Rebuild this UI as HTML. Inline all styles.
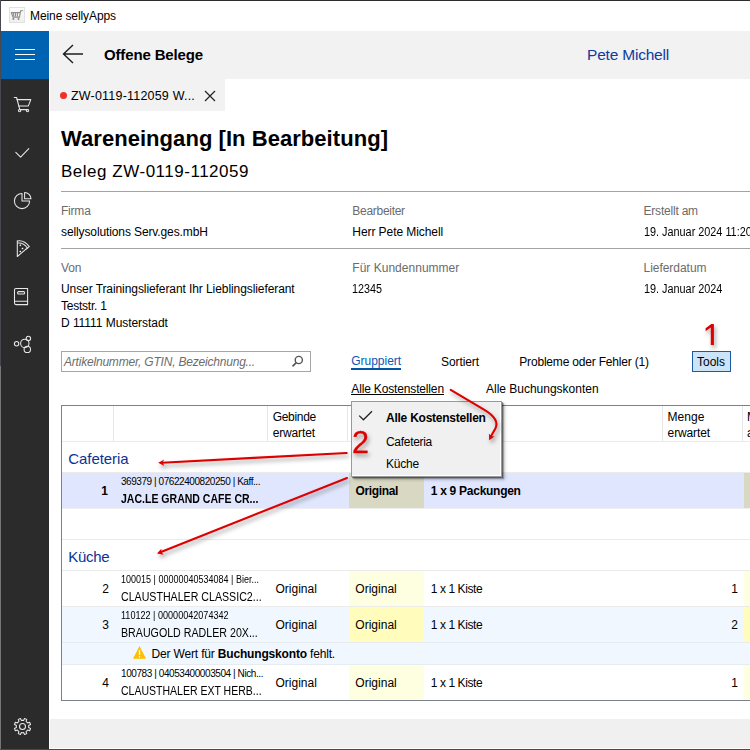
<!DOCTYPE html><html><head><meta charset="utf-8"><style>
html,body{margin:0;padding:0;width:750px;height:750px;overflow:hidden;background:#fff;}
body{position:relative;font-family:"Liberation Sans", sans-serif;}
body>div,.t{position:absolute;}
.t{white-space:nowrap;line-height:1;}
</style></head><body>
<div style="left:0px;top:0px;width:750px;height:1px;background:#2d2d2d;"></div>
<div style="left:0px;top:0px;width:1px;height:366px;background:#48484e;"></div>
<div style="left:0px;top:366px;width:1px;height:384px;background:#767676;"></div>
<div style="left:0px;top:749px;width:750px;height:1px;background:#4a4a4a;"></div>
<div style="left:9px;top:7px;width:16px;height:16px;box-sizing:border-box;border:1px solid #e2e2e2;background:linear-gradient(#fdfdfd,#efefef);"></div>
<svg style="position:absolute;left:9px;top:7px" width="16" height="16" viewBox="9 7 16 16"><g fill="none" stroke="#8c8c8c" stroke-width="1.1"><path d="M11.2 12.3 L13 17.1 H19.5 L20.6 10.7 H23.2"/><path d="M11.2 12.6 H20.2 M13.3 12.6 L13.9 16.5 M15.5 12.6 V16.5 M17.6 12.6 L17.3 16.5"/></g><circle cx="13.4" cy="19.1" r="1" fill="#888"/><circle cx="18.5" cy="19.1" r="1" fill="#888"/></svg>
<div style="left:1px;top:31px;width:48px;height:718px;background:#2b2b2b;"></div>
<div style="left:1px;top:31px;width:48px;height:48px;background:#0063b1;"></div>
<div style="left:15px;top:49px;width:20px;height:1px;background:#ffffff;"></div>
<div style="left:15px;top:54px;width:20px;height:1px;background:#ffffff;"></div>
<div style="left:15px;top:59px;width:20px;height:1px;background:#ffffff;"></div>
<div style="left:49px;top:31px;width:1px;height:718px;background:#ffffff;"></div>
<div style="left:50px;top:31px;width:700px;height:48px;background:#f2f2f2;"></div>
<svg style="position:absolute;left:60px;top:42px" width="26" height="24" viewBox="0 0 26 24"><path d="M13 3 L3.5 12 L13 21 M3.5 12 H23" fill="none" stroke="#1e1e1e" stroke-width="1.4"/></svg>
<div style="left:50px;top:79px;width:175px;height:32px;background:#f2f2f2;"></div>
<div style="left:60px;top:92px;width:7px;height:7px;border-radius:50%;background:#f0312b"></div>
<svg style="position:absolute;left:203px;top:89px" width="14" height="14" viewBox="0 0 14 14"><path d="M2 2 L12 12 M12 2 L2 12" stroke="#222" stroke-width="1.2"/></svg>
<div style="left:61px;top:191px;width:689px;height:1px;background:#a3a3a3;"></div>
<div style="left:61px;top:248px;width:689px;height:1px;background:#a3a3a3;"></div>
<div style="left:61px;top:351px;width:250px;height:21px;background:#fff;box-sizing:border-box;border:1px solid #a6a6a6;"></div>
<svg style="position:absolute;left:290px;top:354px" width="14" height="14" viewBox="0 0 14 14"><circle cx="8.8" cy="6" r="3.6" fill="none" stroke="#555" stroke-width="1.4"/><path d="M6.3 8.6 L2.5 12.4" stroke="#555" stroke-width="1.6"/></svg>
<div style="left:351px;top:368px;width:50px;height:2px;background:#0055a8;"></div>
<div style="left:351px;top:394px;width:93px;height:1px;background:#000;"></div>
<div style="left:692px;top:351px;width:39px;height:21px;background:#cce4f7;box-sizing:border-box;border:1px solid #1a5aa6;"></div>
<div style="left:61px;top:405px;width:699px;height:296px;background:#fff;box-sizing:border-box;border:1px solid #7a808c;"></div>
<div style="left:113px;top:406px;width:1px;height:35px;background:#e6e6e6;"></div>
<div style="left:267px;top:406px;width:1px;height:35px;background:#e6e6e6;"></div>
<div style="left:347px;top:406px;width:1px;height:35px;background:#e6e6e6;"></div>
<div style="left:662px;top:406px;width:1px;height:35px;background:#e6e6e6;"></div>
<div style="left:742px;top:406px;width:1px;height:35px;background:#e6e6e6;"></div>
<div style="left:62px;top:441px;width:688px;height:1px;background:#ebebeb;"></div>
<div style="left:62px;top:472px;width:688px;height:1px;background:#ebebeb;"></div>
<div style="left:62px;top:473px;width:688px;height:35px;background:#e0e6fd;"></div>
<div style="left:349px;top:473px;width:75px;height:35px;background:#d9d9c3;"></div>
<div style="left:744px;top:473px;width:6px;height:35px;background:#d9d9c3;"></div>
<div style="left:62px;top:508px;width:688px;height:1px;background:#efefef;"></div>
<div style="left:62px;top:539px;width:688px;height:1px;background:#ebebeb;"></div>
<div style="left:62px;top:570px;width:688px;height:1px;background:#ebebeb;"></div>
<div style="left:349px;top:571px;width:75px;height:35px;background:#fefee0;"></div>
<div style="left:744px;top:571px;width:6px;height:35px;background:#fefee0;"></div>
<div style="left:62px;top:606px;width:688px;height:1px;background:#ebebeb;"></div>
<div style="left:62px;top:607px;width:688px;height:35px;background:#f0f7fe;"></div>
<div style="left:349px;top:607px;width:75px;height:35px;background:#fffcbc;"></div>
<div style="left:744px;top:607px;width:6px;height:35px;background:#fffcbc;"></div>
<div style="left:62px;top:642px;width:688px;height:1px;background:#e6ecef;"></div>
<div style="left:62px;top:643px;width:688px;height:21px;background:#f0f7fe;"></div>
<div style="left:62px;top:664px;width:688px;height:1px;background:#e6ecef;"></div>
<div style="left:349px;top:665px;width:75px;height:35px;background:#fefee0;"></div>
<div style="left:744px;top:665px;width:6px;height:35px;background:#fefee0;"></div>
<svg style="position:absolute;left:132px;top:645px" width="15" height="15" viewBox="0 0 15 15"><path d="M7.5 1 L14 13.8 L1 13.8 Z" fill="#ffbe00"/><path d="M7.5 5 V10" stroke="#fff" stroke-width="1.3"/><circle cx="7.5" cy="11.8" r="0.75" fill="#fff"/></svg>
<div style="left:50px;top:719px;width:700px;height:29px;background:#f0f0f0;"></div>
<div style="left:351px;top:401px;width:151px;height:76px;background:#f0f0f0;box-sizing:border-box;border:1px solid #999;box-shadow:inset -1px -1px 0 #fff, 1px 1px 0 rgba(0,0,0,0.35), 2px 2px 1px rgba(0,0,0,0.25), 3px 3px 3px rgba(0,0,0,0.2);"></div>
<div style="left:352px;top:402px;width:28px;height:73px;background:#f1f1f1;"></div>
<svg style="position:absolute;left:0;top:0" width="50" height="750" viewBox="0 0 50 750"><g fill="none" stroke="#e8e8e8" stroke-width="1.05" stroke-linecap="round" stroke-linejoin="round"><path d="M14.3 97.5 H16.6 L19.8 109.6 H28"/><path d="M17 99.6 H30.8 L28.4 105.9 H18.6"/><circle cx="19.6" cy="110.6" r="1.2"/><circle cx="27.5" cy="110.6" r="1.2"/><path d="M15.8 152.3 L20.6 157.1 L28.8 148.6"/><path d="M22 193.4 A7.6 7.6 0 1 0 29.6 201 H22 Z"/><path d="M24.6 192.4 V198.8 H31 A6.4 6.4 0 0 0 24.6 192.4 Z"/><path d="M17.3 241 V256.5 L26 249.2"/><path d="M17.3 241 Q24 239.6 29.3 246.6 L26 249.2"/><path d="M18 243 Q23.5 242.5 27.6 248.2"/><path d="M16 288.4 H27.6 V304.6 H16 Q14.5 304.6 14.5 303 V290 Q14.5 288.4 16 288.4 Z"/><path d="M14.5 301.2 H27.6"/><rect x="17.6" y="291.6" width="7" height="2.4" rx="1"/><circle cx="16.6" cy="343.8" r="2.2"/><circle cx="24.8" cy="343.4" r="4.2"/><circle cx="28.4" cy="338.4" r="2.2"/><circle cx="27.3" cy="349.4" r="3.2"/><path d="M22.50 720.30 L23.57 720.39 L24.56 718.46 L26.73 719.36 L26.07 721.43 L26.88 722.12 L26.88 722.12 L27.57 722.93 L29.64 722.27 L30.54 724.44 L28.61 725.43 L28.70 726.50 L28.70 726.50 L28.61 727.57 L30.54 728.56 L29.64 730.73 L27.57 730.07 L26.88 730.88 L26.88 730.88 L26.07 731.57 L26.73 733.64 L24.56 734.54 L23.57 732.61 L22.50 732.70 L22.50 732.70 L21.43 732.61 L20.44 734.54 L18.27 733.64 L18.93 731.57 L18.12 730.88 L18.12 730.88 L17.43 730.07 L15.36 730.73 L14.46 728.56 L16.39 727.57 L16.30 726.50 L16.30 726.50 L16.39 725.43 L14.46 724.44 L15.36 722.27 L17.43 722.93 L18.12 722.12 L18.12 722.12 L18.93 721.43 L18.27 719.36 L20.44 718.46 L21.43 720.39 L22.50 720.30 Z"/><circle cx="22.5" cy="726.5" r="3"/></g><g fill="#ffffff"><path d="M20.3 244.3 l1 1 l-1 1 l-1 -1 Z M22.5 247.4 l1 1 l-1 1 l-1 -1 Z M20.3 250.6 l1 1 l-1 1 l-1 -1 Z"/></g></svg>
<div class="t" id="t0" style="top:10.00px;font-size:12px;line-height:12px;color:#000;left:30.00px;letter-spacing:-0.092px">Meine sellyApps</div>
<div class="t" id="t1" style="top:47.00px;font-size:15px;line-height:15px;color:#000;left:104.00px;font-weight:bold;letter-spacing:-0.144px">Offene Belege</div>
<div class="t" id="t2" style="top:47.00px;font-size:15.5px;line-height:15.5px;color:#0f3a9f;left:587.00px;letter-spacing:-0.203px">Pete Michell</div>
<div class="t" id="t3" style="top:90.00px;font-size:12.5px;line-height:12.5px;color:#000;left:71.00px;letter-spacing:0.200px">ZW-0119-112059 W...</div>
<div class="t" id="t4" style="top:128.00px;font-size:22px;line-height:22px;color:#000;left:61.00px;font-weight:bold;letter-spacing:0.051px">Wareneingang [In Bearbeitung]</div>
<div class="t" id="t5" style="top:163.00px;font-size:17px;line-height:17px;color:#000;left:61.00px;letter-spacing:0.516px">Beleg ZW-0119-112059</div>
<div class="t" id="t6" style="top:205.00px;font-size:12px;line-height:12px;color:#6b6b6b;left:61.00px;letter-spacing:-0.214px">Firma</div>
<div class="t" id="t7" style="top:205.00px;font-size:12px;line-height:12px;color:#6b6b6b;left:352.30px;letter-spacing:-0.287px">Bearbeiter</div>
<div class="t" id="t8" style="top:205.00px;font-size:12px;line-height:12px;color:#6b6b6b;left:643.50px;letter-spacing:-0.208px">Erstellt am</div>
<div class="t" id="t9" style="top:226.00px;font-size:12px;line-height:12px;color:#000;left:61.00px;letter-spacing:-0.113px">sellysolutions Serv.ges.mbH</div>
<div class="t" id="t10" style="top:226.00px;font-size:12px;line-height:12px;color:#000;left:352.30px;letter-spacing:-0.072px">Herr Pete Michell</div>
<div class="t" id="t11" style="top:226.00px;font-size:12px;line-height:12px;color:#000;left:643.50px;transform:scaleX(0.9037);transform-origin:left top">19. Januar 2024 11:20</div>
<div class="t" id="t12" style="top:262.00px;font-size:12px;line-height:12px;color:#6b6b6b;left:61.00px;letter-spacing:-0.101px">Von</div>
<div class="t" id="t13" style="top:262.00px;font-size:12px;line-height:12px;color:#6b6b6b;left:352.30px;letter-spacing:0.018px">Für Kundennummer</div>
<div class="t" id="t14" style="top:262.00px;font-size:12px;line-height:12px;color:#6b6b6b;left:643.50px;letter-spacing:-0.034px">Lieferdatum</div>
<div class="t" id="t15" style="top:283.00px;font-size:12px;line-height:12px;color:#000;left:61.00px;letter-spacing:-0.082px">Unser Trainingslieferant Ihr Lieblingslieferant</div>
<div class="t" id="t16" style="top:300.00px;font-size:12px;line-height:12px;color:#000;left:61.00px;letter-spacing:-0.243px">Teststr. 1</div>
<div class="t" id="t17" style="top:317.00px;font-size:12px;line-height:12px;color:#000;left:61.00px;letter-spacing:-0.055px">D 11111 Musterstadt</div>
<div class="t" id="t18" style="top:283.00px;font-size:12px;line-height:12px;color:#000;left:352.30px;transform:scaleX(0.8989);transform-origin:left top">12345</div>
<div class="t" id="t19" style="top:283.00px;font-size:12px;line-height:12px;color:#000;left:643.50px;transform:scaleX(0.9037);transform-origin:left top">19. Januar 2024</div>
<div class="t" id="t20" style="top:356.00px;font-size:12px;line-height:12px;color:#6d6d6d;left:64.00px;font-style:italic;letter-spacing:-0.202px">Artikelnummer, GTIN, Bezeichnung...</div>
<div class="t" id="t21" style="top:355.00px;font-size:12px;line-height:12px;color:#0a58b4;left:351.30px;letter-spacing:-0.026px">Gruppiert</div>
<div class="t" id="t22" style="top:356.00px;font-size:12px;line-height:12px;color:#000;left:441.00px;letter-spacing:-0.086px">Sortiert</div>
<div class="t" id="t23" style="top:356.00px;font-size:12px;line-height:12px;color:#000;left:519.30px;letter-spacing:-0.190px">Probleme oder Fehler (1)</div>
<div class="t" id="t24" style="top:356.00px;font-size:12px;line-height:12px;color:#000;left:697.00px;letter-spacing:-0.003px">Tools</div>
<div class="t" id="t25" style="top:383.00px;font-size:12px;line-height:12px;color:#000;left:351.30px;letter-spacing:-0.155px">Alle Kostenstellen</div>
<div class="t" id="t26" style="top:383.00px;font-size:12px;line-height:12px;color:#000;left:486.00px;letter-spacing:-0.008px">Alle Buchungskonten</div>
<div class="t" id="t27" style="top:411.00px;font-size:12px;line-height:12px;color:#000;left:272.70px;letter-spacing:-0.296px">Gebinde</div>
<div class="t" id="t28" style="top:427.00px;font-size:12px;line-height:12px;color:#000;left:272.70px;letter-spacing:-0.145px">erwartet</div>
<div class="t" id="t29" style="top:411.00px;font-size:12px;line-height:12px;color:#000;left:667.60px;letter-spacing:0.019px">Menge</div>
<div class="t" id="t30" style="top:427.00px;font-size:12px;line-height:12px;color:#000;left:667.60px;letter-spacing:-0.120px">erwartet</div>
<div class="t" id="t31" style="top:411.00px;font-size:12px;line-height:12px;color:#000;left:747.00px;letter-spacing:0.019px">Menge</div>
<div class="t" id="t32" style="top:427.00px;font-size:12px;line-height:12px;color:#000;left:747.00px">abweichend</div>
<div class="t" id="t33" style="top:451.00px;font-size:15px;line-height:15px;color:#0d3294;left:68.30px;letter-spacing:-0.075px">Cafeteria</div>
<div class="t" id="t34" style="top:549.00px;font-size:15px;line-height:15px;color:#0d3294;left:68.30px;letter-spacing:-0.309px">Küche</div>
<div class="t" id="t35" style="top:485.00px;font-size:12px;line-height:12px;color:#000;right:642.00px;font-weight:bold">1</div>
<div class="t" id="t36" style="top:477.00px;font-size:10px;line-height:10px;color:#000;left:121.00px;letter-spacing:-0.439px">369379 | 07622400820250 | Kaff...</div>
<div class="t" id="t37" style="top:493.00px;font-size:12px;line-height:12px;color:#000;left:121.00px;font-weight:bold;transform:scaleX(0.8769);transform-origin:left top">JAC.LE GRAND CAFE CR...</div>
<div class="t" id="t38" style="top:485.00px;font-size:12px;line-height:12px;color:#000;left:355.50px;font-weight:bold;letter-spacing:-0.343px">Original</div>
<div class="t" id="t39" style="top:485.00px;font-size:12px;line-height:12px;color:#000;left:430.70px;font-weight:bold;letter-spacing:-0.270px">1 x 9 Packungen</div>
<div class="t" id="t40" style="top:583.00px;font-size:12px;line-height:12px;color:#000;right:641.00px">2</div>
<div class="t" id="t41" style="top:575.00px;font-size:10px;line-height:10px;color:#000;left:121.00px;transform:scaleX(0.9013);transform-origin:left top">100015 | 00000040534084 | Bier...</div>
<div class="t" id="t42" style="top:591.00px;font-size:12px;line-height:12px;color:#000;left:121.00px;transform:scaleX(0.8858);transform-origin:left top">CLAUSTHALER CLASSIC2...</div>
<div class="t" id="t43" style="top:583.00px;font-size:12px;line-height:12px;color:#000;left:275.40px;letter-spacing:0.018px">Original</div>
<div class="t" id="t44" style="top:583.00px;font-size:12px;line-height:12px;color:#000;left:355.30px;letter-spacing:0.018px">Original</div>
<div class="t" id="t45" style="top:583.00px;font-size:12px;line-height:12px;color:#000;left:430.70px;letter-spacing:-0.403px">1 x 1 Kiste</div>
<div class="t" id="t46" style="top:583.00px;font-size:12px;line-height:12px;color:#000;right:12.00px">1</div>
<div class="t" id="t47" style="top:619.00px;font-size:12px;line-height:12px;color:#000;right:641.00px">3</div>
<div class="t" id="t48" style="top:611.00px;font-size:10px;line-height:10px;color:#000;left:121.00px;transform:scaleX(0.9068);transform-origin:left top">110122 | 00000042074342</div>
<div class="t" id="t49" style="top:627.00px;font-size:12px;line-height:12px;color:#000;left:121.00px;transform:scaleX(0.8880);transform-origin:left top">BRAUGOLD RADLER 20X...</div>
<div class="t" id="t50" style="top:619.00px;font-size:12px;line-height:12px;color:#000;left:275.40px;letter-spacing:0.018px">Original</div>
<div class="t" id="t51" style="top:619.00px;font-size:12px;line-height:12px;color:#000;left:355.30px;letter-spacing:0.018px">Original</div>
<div class="t" id="t52" style="top:619.00px;font-size:12px;line-height:12px;color:#000;left:430.70px;letter-spacing:-0.403px">1 x 1 Kiste</div>
<div class="t" id="t53" style="top:619.00px;font-size:12px;line-height:12px;color:#000;right:12.00px">2</div>
<div class="t" id="t54" style="top:677.00px;font-size:12px;line-height:12px;color:#000;right:641.00px">4</div>
<div class="t" id="t55" style="top:669.00px;font-size:10px;line-height:10px;color:#000;left:121.00px;letter-spacing:-0.421px">100783 | 04053400003504 | Nich...</div>
<div class="t" id="t56" style="top:685.00px;font-size:12px;line-height:12px;color:#000;left:121.00px;transform:scaleX(0.8760);transform-origin:left top">CLAUSTHALER EXT HERB...</div>
<div class="t" id="t57" style="top:677.00px;font-size:12px;line-height:12px;color:#000;left:275.40px;letter-spacing:0.018px">Original</div>
<div class="t" id="t58" style="top:677.00px;font-size:12px;line-height:12px;color:#000;left:355.30px;letter-spacing:0.018px">Original</div>
<div class="t" id="t59" style="top:677.00px;font-size:12px;line-height:12px;color:#000;left:430.70px;letter-spacing:-0.403px">1 x 1 Kiste</div>
<div class="t" id="t60" style="top:677.00px;font-size:12px;line-height:12px;color:#000;right:12.00px">1</div>
<div class="t" id="t61" style="top:648.00px;font-size:12px;line-height:12px;color:#000;left:151.60px;letter-spacing:-0.174px">Der Wert für <b>Buchungskonto</b> fehlt.</div>
<div class="t" id="t62" style="top:412.00px;font-size:12px;line-height:12px;color:#000;left:386.00px;font-weight:bold;letter-spacing:-0.241px">Alle Kostenstellen</div>
<div class="t" id="t63" style="top:436.00px;font-size:12px;line-height:12px;color:#000;left:386.00px;letter-spacing:-0.300px">Cafeteria</div>
<div class="t" id="t64" style="top:458.00px;font-size:12px;line-height:12px;color:#000;left:386.00px;letter-spacing:-0.206px">Küche</div>
<svg style="position:absolute;left:350px;top:400px" width="40" height="30" viewBox="350 400 40 30"><path d="M359.2 415.6 L363.4 419.8 L372 411.2" fill="none" stroke="#222" stroke-width="1.25"/></svg>
<svg style="position:absolute;left:0;top:0" width="750" height="750" viewBox="0 0 750 750"><defs><filter id="sh" x="-20%" y="-20%" width="140%" height="160%"><feDropShadow dx="1.5" dy="3" stdDeviation="2.3" flood-color="#000" flood-opacity="0.38"/></filter></defs><g filter="url(#sh)"><g fill="none" stroke="#dd0000" stroke-width="2.1" stroke-linecap="round"><path d="M450.7 389.9 L484 409.6 Q500 419 495.4 428.5 L490.8 436.5"/><path d="M346.7 453 L162 462.7"/><path d="M347 478 L161 551.9"/></g><g fill="#dd0000"><path d="M489.2 440.2 L488.9 433.4 L490.9 435.9 L494.6 436.4 Z"/><path d="M158.2 462.8 L164.3 459.6 L162.5 462.6 L164.3 465.9 Z"/><path d="M157 553.5 L161.3 548.7 L161.4 552 L163.5 554.8 Z"/></g><path d="M713.9 324 H711.3 L705.6 328.3 V331.3 L710.8 327.6 V345 H713.9 Z" fill="#dd0000"/><text x="352" y="453" font-family="Liberation Sans" font-size="30.5" fill="#dd0000" stroke="#dd0000" stroke-width="0.3">2</text></g></svg>
</body></html>
